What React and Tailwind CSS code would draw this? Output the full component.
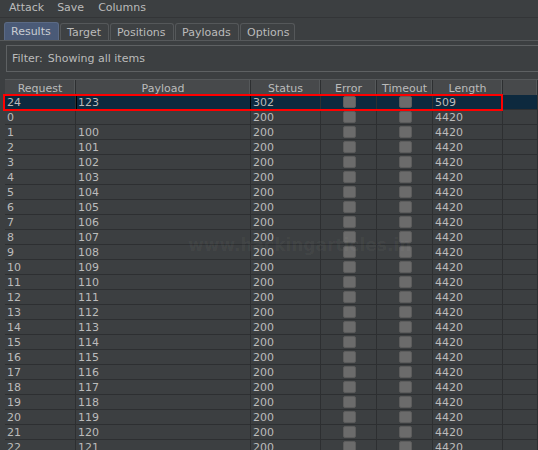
const font = { fontFamily: '"DejaVu Sans", "Liberation Sans", sans-serif' };

const tabs = [
  { label: "Results", w: "w-[55px]", active: true },
  { label: "Target", w: "w-[49px]" },
  { label: "Positions", w: "w-[64px]" },
  { label: "Payloads", w: "w-[64px]" },
  { label: "Options", w: "w-[55px]" },
];

const cols = [
  { name: "Request", w: "w-[71px]" },
  { name: "Payload", w: "w-[175px]" },
  { name: "Status", w: "w-[70px]" },
  { name: "Error", w: "w-[56px]" },
  { name: "Timeout", w: "w-[56px]" },
  { name: "Length", w: "w-[70px]" },
  { name: "", w: "flex-1" },
];

const rows = [
  { req: "24", payload: "123", status: "302", length: "509", selected: true },
  ...Array.from({ length: 23 }, (_, i) => ({
    req: String(i),
    payload: i === 0 ? "" : String(99 + i),
    status: "200",
    length: "4420",
  })),
];

function Check() {
  return (
    <span className="block w-[13px] h-[12px] rounded-[2px] bg-[#6b6b6b] border border-[#5c5c5c]" />
  );
}

function Row({ r }) {
  const bg = r.selected ? "bg-[#0d293e]" : "bg-[#3c3f41]";
  const cell = `h-[15px] border-r border-b border-[#2d2f31] flex items-center pl-[2px] ${bg}`;
  return (
    <div className="flex">
      <div className={`${cell} w-[71px]`}>{r.req}</div>
      <div
        className={`${cell} w-[175px] ${r.selected ? "outline outline-1 -outline-offset-1 outline-black" : ""}`}
      >
        {r.payload}
      </div>
      <div className={`${cell} w-[70px]`}>{r.status}</div>
      <div className={`${cell} w-[56px] justify-center pl-0`}>
        <Check />
      </div>
      <div className={`${cell} w-[56px] justify-center pl-0`}>
        <Check />
      </div>
      <div className={`${cell} w-[70px]`}>{r.length}</div>
      <div className={`${cell} flex-1`} />
    </div>
  );
}

export default function App() {
  return (
    <div
      className="w-[538px] h-[450px] overflow-hidden bg-[#3c3f41] text-[#bbbbbb] text-[11px] leading-[13px] relative"
      style={font}
    >
      {/* menu */}
      <div className="h-[18px] flex items-center pb-[3px] border-b border-[#333537]">
        <span className="ml-[9px]">Attack</span>
        <span className="ml-[13px]">Save</span>
        <span className="ml-[14px]">Columns</span>
      </div>

      {/* tabs */}
      <div className="mt-[4px] h-[19px] flex items-end pl-[4px] gap-[1px] border-b border-[#56595b]">
        {tabs.map((t) =>
          t.active ? (
            <div
              key={t.label}
              className={`${t.w} h-[18px] flex items-center pl-[6px] bg-[#4a5a77] border border-b-0 border-[#5b6a85] rounded-t-[3px] text-[#c8ccd2]`}
            >
              {t.label}
            </div>
          ) : (
            <div
              key={t.label}
              className={`${t.w} h-[17px] flex items-center pl-[6px] bg-[#3e4143] border border-b-0 border-[#55585a] rounded-t-[3px]`}
            >
              {t.label}
            </div>
          )
        )}
      </div>

      {/* filter */}
      <div className="mt-[4px] ml-[6px] mr-[-4px] h-[27px] border border-[#5e6163] flex items-center pl-[5px]">
        <span>Filter:</span>
        <span className="ml-[5px]">Showing all items</span>
      </div>

      {/* table */}
      <div className="mt-[7px] ml-[5px] relative">
        <div className="flex h-[16px] bg-[#47494b] border-t border-[#55585a]">
          {cols.map((c, i) => (
            <div
              key={i}
              className={`${c.w} h-full flex items-center justify-center pt-[2px] border-r border-[#2d2f31] shadow-[inset_-1px_0_0_#55585a]`}
            >
              {c.name}
            </div>
          ))}
        </div>
        {rows.map((r, i) => (
          <Row key={i} r={r} />
        ))}

        {/* highlight */}
        <div className="absolute left-[-2px] top-[15px] w-[500px] h-[17px] border-2 border-[#ff0000]" />
      </div>

      {/* watermark */}
      <div className="absolute left-[188px] top-[234px] text-[17px] leading-[22px] font-bold text-white/[0.045] pointer-events-none">
        www.hackingarticles.in
      </div>
    </div>
  );
}
